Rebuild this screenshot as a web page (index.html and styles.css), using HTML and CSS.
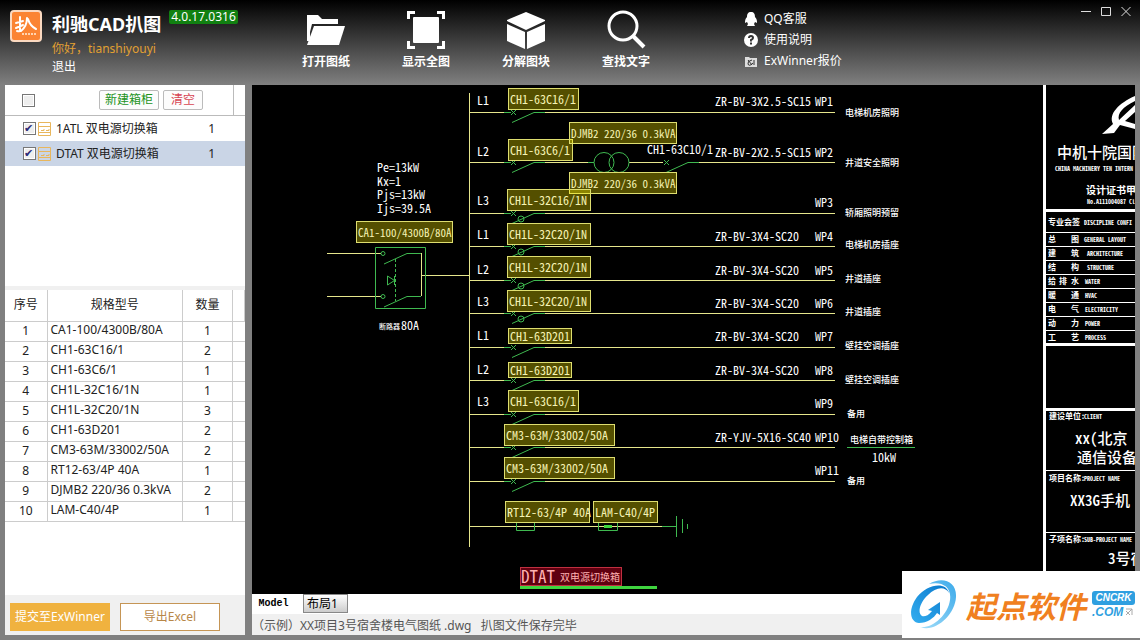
FILE: index.html
```html
<!DOCTYPE html>
<html lang="zh-CN">
<head>
    <meta charset="UTF-8">
    <meta name="viewport" content="width=device-width, initial-scale=1.0">
    <title>利驰CAD扒图</title>
    <link rel="stylesheet" href="styles.css">
</head>
<body>
    <!-- Title bar -->
    <header class="topbar">
        <div class="brand">
            <svg class="brandLogo" viewBox="0 0 32 32" aria-hidden="true">
                <rect x="1" y="1" width="30" height="30" rx="3" fill="#fb8433" stroke="#fbd9c0" stroke-width="2"/>
                <path d="M6 13l7-2M10 7v13q0 2-3 1M6 18l7-3M17 8q0 8-6 13M18 9q2 7 8 10" fill="none" stroke="#fff" stroke-width="2" stroke-linecap="round"/>
                <path d="M12 24h15" stroke="#ffd3b0" stroke-width="2" stroke-dasharray="2 1"/>
            </svg>
            <div class="brandText">
                <div class="titleLine">
                    <h1>利驰CAD扒图</h1>
                    <span class="version">4.0.17.0316</span>
                </div>
                <span class="hello">你好，tianshiyouyi</span>
                <a class="logout" href="#">退出</a>
            </div>
        </div>

        <nav class="tools">
            <button type="button">
                <svg viewBox="0 0 40 40"><path d="M1 5h11l4 4h16v5H6L2 30z" fill="#fff"/><path d="M1 5h3v26H1z" fill="#fff"/><path d="M8 16h31l-6 19H1z" fill="#fff"/></svg>
                打开图纸
            </button>
            <button type="button">
                <svg viewBox="0 0 40 40"><rect x="7" y="7" width="26" height="26" rx="1" fill="#fff"/><path d="M2.500 9V2.500H9M31 2.500h6.500V9M37.500 31v6.500H31M9 37.500H2.500V31" fill="none" stroke="#fff" stroke-width="3"/></svg>
                显示全图
            </button>
            <button type="button">
                <svg viewBox="0 0 40 40"><path d="M20 2l19 8v1l-19 9L1 11v-1zM1 14l18 8v17L1 31zM39 14l-18 8v17l18-8z" fill="#fff"/></svg>
                分解图块
            </button>
            <button type="button">
                <svg viewBox="0 0 40 40"><circle cx="17" cy="16" r="14" fill="none" stroke="#fff" stroke-width="3"/><path d="M27 26l11 11" stroke="#fff" stroke-width="4"/></svg>
                查找文字
            </button>
        </nav>

        <div class="help">
            <a href="#">
                <svg viewBox="0 0 14 14"><path d="M7 0c3 0 4 2 4 5 2 2 2 4 2 6l-2-1-1 2 1 2H3l1-2-1-2-2 1c0-2 0-4 2-6 0-3 1-5 4-5z" fill="#fff"/></svg>
                QQ客服
            </a>
            <a href="#">
                <svg viewBox="0 0 14 14"><circle cx="7" cy="7" r="7" fill="#fff"/><path d="M5 5q0-2 2-2t2 2q0 1-2 2v1.500M7 9.500v2" fill="none" stroke="#333" stroke-width="2"/></svg>
                使用说明
            </a>
            <a href="#">
                <svg viewBox="0 0 14 14"><path d="M1 3h4l1 1h7v9H1z" fill="#ddd"/><path d="M4 6l4 5M8 6q-5 1-4 4t5-1M10 6v5" fill="none" stroke="#333"/></svg>
                ExWinner报价
            </a>
        </div>

        <div class="windowButtons">
            <button type="button" aria-label="最小化"><svg viewBox="0 0 12 12"><path d="M1 6.500h10"/></svg></button>
            <button type="button" aria-label="最大化"><svg viewBox="0 0 12 12"><path d="M1.500 2.500h9v8h-9z"/></svg></button>
            <button type="button" aria-label="关闭"><svg viewBox="0 0 12 12"><path d="M1.500 2l9 9M10.500 2l-9 9"/></svg></button>
        </div>
    </header>

    <div class="workspace">
        <!-- Left panel: cabinets and parts -->
        <aside class="sidebar">
            <div class="cabinetHead">
                <input type="checkbox" aria-label="全选">
                <div class="cabinetActions">
                    <button type="button" class="newCabinet">新建箱柜</button>
                    <button type="button" class="clearCabinet">清空</button>
                </div>
            </div>
            <ul class="cabinets">
                <li>
                    <input type="checkbox" id="cab1" checked>
                    <svg viewBox="0 0 14 16"><path d="M.500 1.500h12v13H.500zM.500 5.500h12M.500 11.500h12M3 9.500h3V8M8 9.500h3V8" fill="none" stroke="#e8b65c"/></svg>
                    <label for="cab1">1ATL 双电源切换箱</label>
                    <span class="count">1</span>
                </li>
                <li class="selected">
                    <input type="checkbox" id="cab2" checked>
                    <svg viewBox="0 0 14 16"><path d="M.500 1.500h12v13H.500zM.500 5.500h12M.500 11.500h12M3 9.500h3V8M8 9.500h3V8" fill="none" stroke="#e8b65c"/></svg>
                    <label for="cab2">DTAT 双电源切换箱</label>
                    <span class="count">1</span>
                </li>
            </ul>
            <div class="parts">
                <table>
                    <thead>
                        <tr><th class="no">序号</th><th>规格型号</th><th class="qty">数量</th><th class="end"></th></tr>
                    </thead>
                    <tbody>
                        <tr><td>1</td><td>CA1-100/4300B/80A</td><td>1</td><td></td></tr>
                        <tr><td>2</td><td>CH1-63C16/1</td><td>2</td><td></td></tr>
                        <tr><td>3</td><td>CH1-63C6/1</td><td>1</td><td></td></tr>
                        <tr><td>4</td><td>CH1L-32C16/1N</td><td>1</td><td></td></tr>
                        <tr><td>5</td><td>CH1L-32C20/1N</td><td>3</td><td></td></tr>
                        <tr><td>6</td><td>CH1-63D201</td><td>2</td><td></td></tr>
                        <tr><td>7</td><td>CM3-63M/33002/50A</td><td>2</td><td></td></tr>
                        <tr><td>8</td><td>RT12-63/4P 40A</td><td>1</td><td></td></tr>
                        <tr><td>9</td><td>DJMB2 220/36 0.3kVA</td><td>2</td><td></td></tr>
                        <tr><td>10</td><td>LAM-C40/4P</td><td>1</td><td></td></tr>
                    </tbody>
                </table>
            </div>
            <div class="sidebarFoot">
                <button type="button" class="submit">提交至ExWinner</button>
                <button type="button" class="export">导出Excel</button>
            </div>
        </aside>

        <!-- Drawing view -->
        <main class="viewer">
            <div class="canvas">
                <svg class="drawing" viewBox="252 85 883 509" preserveAspectRatio="xMinYMin meet">
                    <defs>
                        <!-- one outgoing way: line, contact cross and blade -->
                        <g id="way">
                            <path class="wire" d="M470 .500h34M545 .500h290"/>
                            <path class="sym" d="M504 .500h7M511 -2l5 5M516 -2l-5 5M512 10.500l22-10h11"/>
                        </g>
                        <g id="rcd">
                            <use href="#way"/>
                            <circle class="sym" cx="521" cy="6" r="3"/>
                        </g>
                    </defs>

                    <!-- busbar and outgoing ways -->
                    <path class="wire" d="M469.500 93v454"/>
                    <use href="#way" y="112"/>
                    <path class="wire" d="M470 162.500h34M545 162.500h49M629 162.500h34M698 162.500h137"/>
                    <path class="sym" d="M504 162.500h7M511 160l5 5M516 160l-5 5M512 172.500l22-10h11M588 162.500h6M664 160l5 5M669 160l-5 5M666 172.500l22-10h11"/>
                    <circle class="sym" cx="604" cy="162.500" r="10"/>
                    <circle class="sym" cx="619" cy="162.500" r="10"/>
                    <use href="#rcd" y="213"/>
                    <use href="#rcd" y="246"/>
                    <use href="#rcd" y="280"/>
                    <use href="#rcd" y="313"/>
                    <use href="#way" y="347"/>
                    <use href="#way" y="380"/>
                    <use href="#way" y="414"/>
                    <use href="#way" y="447"/>
                    <use href="#way" y="481"/>
                    <path class="wire" d="M470 526.500h192"/>
                    <path class="sym" d="M516.500 522v8.500h18V522M598.500 522v8.500h19V522M662 526.500h14M676.500 516v21M682.500 519v14M687.500 524v5"/>
                    <rect x="604" y="525" width="8" height="3" fill="#3fd43f"/>

                    <!-- incoming changeover switch -->
                    <path class="wire" d="M327 253.500h54M327 296.500h54M421.500 253v43M422 275.500h47"/>
                    <path class="sym" d="M375.500 247.500h50v61h-50zM384 264l23-10.500h14M384 307l23-10.500h14M387.500 276v9l7-4.500zM394.500 276v9"/>
                    <path class="sym dash" d="M395.500 259v42"/>
                    <circle class="sym" cx="383" cy="253.500" r="2"/>
                    <circle class="sym" cx="383" cy="296.500" r="2"/>

                    <g class="cad">
                        <text x="377" y="172">Pe=13kW</text>
                        <text x="377" y="186">Kx=1</text>
                        <text x="377" y="199">Pjs=13kW</text>
                        <text x="377" y="213">Ijs=39.5A</text>
                        <text x="401" y="330">80A</text>
                        <text x="477" y="105">L1</text>
                        <text x="477" y="156">L2</text>
                        <text x="477" y="205">L3</text>
                        <text x="477" y="239">L1</text>
                        <text x="477" y="274">L2</text>
                        <text x="477" y="306">L3</text>
                        <text x="477" y="340">L1</text>
                        <text x="477" y="374">L2</text>
                        <text x="477" y="406">L3</text>
                        <text x="647" y="154">CH1-63C10/1</text>
                        <text x="715" y="106">ZR-BV-3X2.5-SC15</text>
                        <text x="715" y="157">ZR-BV-2X2.5-SC15</text>
                        <text x="715" y="241">ZR-BV-3X4-SC20</text>
                        <text x="715" y="275">ZR-BV-3X4-SC20</text>
                        <text x="715" y="308">ZR-BV-3X4-SC20</text>
                        <text x="715" y="341">ZR-BV-3X4-SC20</text>
                        <text x="715" y="375">ZR-BV-3X4-SC20</text>
                        <text x="715" y="442">ZR-YJV-5X16-SC40</text>
                        <text x="815" y="106">WP1</text>
                        <text x="815" y="157">WP2</text>
                        <text x="815" y="207">WP3</text>
                        <text x="815" y="241">WP4</text>
                        <text x="815" y="275">WP5</text>
                        <text x="815" y="308">WP6</text>
                        <text x="815" y="341">WP7</text>
                        <text x="815" y="375">WP8</text>
                        <text x="815" y="408">WP9</text>
                        <text x="815" y="442">WP10</text>
                        <text x="815" y="475">WP11</text>
                        <text x="872" y="462">10kW</text>
                    </g>

                    <g class="note">
                        <text x="379" y="329" class="tight">断路器</text>
                        <text x="845" y="116">电梯机房照明</text>
                        <text x="845" y="166">井道安全照明</text>
                        <text x="845" y="216">轿厢照明预留</text>
                        <text x="845" y="248">电梯机房插座</text>
                        <text x="845" y="282">井道插座</text>
                        <text x="845" y="315">井道插座</text>
                        <text x="845" y="349">壁挂空调插座</text>
                        <text x="845" y="383">壁挂空调插座</text>
                        <text x="847" y="417">备用</text>
                        <text x="850" y="443">电梯自带控制箱</text>
                        <text x="847" y="484">备用</text>
                    </g>
                    <path class="sym" d="M847 447.500h68"/>

                    <!-- recognised devices -->
                    <g class="hit">
                        <rect x="356.500" y="221.500" width="96" height="21"/>
                        <rect x="508.500" y="88.500" width="70" height="21"/>
                        <rect x="508.500" y="139.500" width="64" height="21"/>
                        <rect x="569.500" y="122.500" width="107" height="21"/>
                        <rect x="569.500" y="172.500" width="107" height="21"/>
                        <rect x="507.500" y="189.500" width="83" height="21"/>
                        <rect x="507.500" y="223.500" width="83" height="21"/>
                        <rect x="507.500" y="256.500" width="83" height="21"/>
                        <rect x="507.500" y="290.500" width="83" height="21"/>
                        <rect x="508.500" y="328.500" width="63" height="15"/>
                        <rect x="508.500" y="362.500" width="63" height="15"/>
                        <rect x="508.500" y="390.500" width="70" height="21"/>
                        <rect x="504.500" y="424.500" width="110" height="21"/>
                        <rect x="504.500" y="457.500" width="110" height="21"/>
                        <rect x="505.500" y="501.500" width="84" height="21"/>
                        <rect x="593.500" y="501.500" width="64" height="21"/>
                    </g>
                    <g class="cad hitText">
                        <text x="358" y="237" class="long">CA1-100/4300B/80A</text>
                        <text x="510" y="104">CH1-63C16/1</text>
                        <text x="510" y="155">CH1-63C6/1</text>
                        <text x="571" y="138" class="long">DJMB2 220/36 0.3kVA</text>
                        <text x="571" y="188" class="long">DJMB2 220/36 0.3kVA</text>
                        <text x="509" y="205">CH1L-32C16/1N</text>
                        <text x="509" y="239">CH1L-32C20/1N</text>
                        <text x="509" y="272">CH1L-32C20/1N</text>
                        <text x="509" y="306">CH1L-32C20/1N</text>
                        <text x="510" y="341">CH1-63D201</text>
                        <text x="510" y="375">CH1-63D201</text>
                        <text x="510" y="406">CH1-63C16/1</text>
                        <text x="506" y="440">CM3-63M/33002/50A</text>
                        <text x="506" y="473">CM3-63M/33002/50A</text>
                        <text x="507" y="517">RT12-63/4P 40A</text>
                        <text x="595" y="517">LAM-C40/4P</text>
                    </g>

                    <!-- cabinet name -->
                    <rect x="520.500" y="567.500" width="101" height="18" fill="#600010" stroke="#c03040"/>
                    <path d="M520 587.500h137" stroke="#3fd43f" stroke-width="3"/>
                    <text class="cabinetName" x="521" y="583">DTAT</text>
                    <text class="cabinetName small" x="560" y="581">双电源切换箱</text>

                    <!-- title block -->
                    <g stroke="#fff" fill="none">
                        <path stroke-width="3" d="M1044.500 85v509M1045 210.500h90M1045 344.500h90M1045 409.500h90"/>
                        <path d="M1046 232.500h89M1046 246.500h89M1046 260.500h89M1046 274.500h89M1046 288.500h89M1046 302.500h89M1046 316.500h89M1046 330.500h89M1046 470.500h89M1046 532.500h89"/>
                    </g>
                    <path d="M1102 134l11-10c-5-10 6-21 22-28v5c-12 6-18 12-16 19l16-15v7l-10 9 10 3v5l-15-4-6 8z" fill="#fff"/>
                    <g class="block">
                        <text x="1057" y="158" class="big">中机十院国际</text>
                        <text x="1055" y="171" class="en">CHINA MACHINERY TEN INTERN</text>
                        <text x="1086" y="194" class="mid">设计证书甲级</text>
                        <text x="1087" y="204" class="en">No.A111004087 Cl</text>
                        <text x="1048" y="225">专业会签</text><text x="1084" y="225" class="en">DISCIPLINE CONFI</text>
                        <text x="1048" y="242">总</text><text x="1071" y="242">图</text><text x="1084" y="242" class="en">GENERAL LAYOUT</text>
                        <text x="1048" y="256">建</text><text x="1071" y="256">筑</text><text x="1087" y="256" class="en">ARCHITECTURE</text>
                        <text x="1048" y="270">结</text><text x="1071" y="270">构</text><text x="1087" y="270" class="en">STRUCTURE</text>
                        <text x="1048" y="284">给</text><text x="1059" y="284">排</text><text x="1071" y="284">水</text><text x="1085" y="284" class="en">WATER</text>
                        <text x="1048" y="298">暖</text><text x="1071" y="298">通</text><text x="1085" y="298" class="en">HVAC</text>
                        <text x="1048" y="312">电</text><text x="1071" y="312">气</text><text x="1085" y="312" class="en">ELECTRICITY</text>
                        <text x="1048" y="326">动</text><text x="1071" y="326">力</text><text x="1085" y="326" class="en">POWER</text>
                        <text x="1048" y="340">工</text><text x="1071" y="340">艺</text><text x="1085" y="340" class="en">PROCESS</text>
                        <text x="1049" y="419">建设单位:</text><text x="1084" y="419" class="en">CLIENT</text>
                        <text x="1075" y="444" class="big">xx（北京</text>
                        <text x="1077" y="463" class="big">通信设备</text>
                        <text x="1049" y="481">项目名称:</text><text x="1084" y="481" class="en">PROJECT NAME</text>
                        <text x="1070" y="506" class="big">XX3G手机</text>
                        <text x="1049" y="542">子项名称:</text><text x="1084" y="542" class="en">SUB-PROJECT NAME</text>
                        <text x="1108" y="564" class="big">3号宿</text>
                    </g>
                </svg>
            </div>
            <div class="tabs">
                <button type="button" class="tab active">Model</button>
                <button type="button" class="tab layout">布局1</button>
            </div>
            <footer class="status">（示例）XX项目3号宿舍楼电气图纸 .dwg &nbsp; 扒图文件保存完毕</footer>
        </main>
    </div>

    <!-- Site badge over the bottom right corner -->
    <div class="badge">
        <svg class="badgeLogo" viewBox="0 0 48 50" aria-hidden="true">
            <defs>
                <linearGradient id="ring" x1="0" y1="1" x2="1" y2="0">
                    <stop offset="0" stop-color="#35aef0"/>
                    <stop offset="1" stop-color="#0878cc"/>
                </linearGradient>
                <linearGradient id="shade" x1="1" y1="0" x2="0" y2="1">
                    <stop offset="0" stop-color="#3aa9ea"/>
                    <stop offset="1" stop-color="#a4def9"/>
                </linearGradient>
            </defs>
            <path d="M19 4C32-4 47 1 46 17 45 35 25 53 10 47 22 49 38 35 40 20 42 6 31 1 19 4z" fill="url(#shade)"/>
            <path d="M39 13C36 1 17 4 7 17-3 31 1 43 9 43c8 0 15-5 18-10l3 2V22l-12 8 4 1c-4 5-8 6-10 5-5-3-2-14 6-21 8-8 17-9 21-2z" fill="url(#ring)"/>
        </svg>
        <span class="badgeName">起点软件</span>
        <span class="badgeSite">
            <span class="bubble">CNCRK</span>
            <span class="dotcom">.COM<svg viewBox="0 0 8 8"><path d="M1 1h6v6M1 7l6-6M1 3l4 4" fill="none" stroke="#aaa"/></svg></span>
        </span>
    </div>
</body>
</html>
```
FILE: styles.css
```css
* {
    box-sizing: border-box;
}

body {
    margin: 0;
    min-height: 100vh;
    display: flex;
    flex-direction: column;
    position: relative;
    background: #808080;
    font-family: "Noto Sans", "Noto Sans CJK SC", sans-serif;
    font-size: 12px;
    line-height: 16px;
    color: #222;
}

button {
    font: inherit;
    padding: 0;
    cursor: pointer;
}

a {
    color: inherit;
    text-decoration: none;
}

/* Title bar */
.topbar {
    display: flex;
    height: 85px;
    background: linear-gradient(#000, #808080);
    color: #fff;
}

.brand {
    display: flex;
    gap: 10px;
    width: 276px;
    padding: 10px 0 0 10px;
}

.brandLogo {
    width: 32px;
    height: 32px;
}

.brandText {
    display: flex;
    flex-direction: column;
    align-items: flex-start;
    white-space: nowrap;
}

.titleLine {
    display: flex;
    gap: 8px;
    align-items: flex-start;
}

h1 {
    margin: 0;
    font-size: 18px;
    line-height: 29px;
}

.version {
    padding: 0 2px;
    border-radius: 2px;
    background: #118011;
    line-height: 14px;
}

.hello {
    color: #e2a032;
    font-size: 12px;
    line-height: 20px;
}

.tools {
    display: flex;
}

.tools button {
    display: flex;
    flex-direction: column;
    align-items: center;
    gap: 4px;
    width: 100px;
    padding-top: 10px;
    border: 0;
    background: none;
    color: #fff;
    font-weight: bold;
}

.tools svg {
    width: 40px;
    height: 40px;
}

.help {
    display: flex;
    flex-direction: column;
    gap: 5px;
    padding: 11px 0 0 68px;
}

.help a {
    display: flex;
    align-items: center;
    gap: 6px;
}

.help svg {
    width: 14px;
    height: 14px;
}

.windowButtons {
    display: flex;
    align-items: flex-start;
    gap: 8px;
    margin-left: auto;
    padding: 5px 8px 0 0;
}

.windowButtons button {
    display: flex;
    border: 0;
    background: none;
}

.windowButtons svg {
    width: 12px;
    height: 12px;
    fill: none;
    stroke: #ddd;
}

/* Body of the window */
.workspace {
    flex: 1;
    display: flex;
    gap: 7px;
    padding: 0 5px 5px;
}

.sidebar {
    display: flex;
    flex-direction: column;
    width: 240px;
    background: #fff;
}

input[type="checkbox"] {
    appearance: none;
    width: 13px;
    height: 13px;
    margin: 0;
    border: 1px solid #777;
    background: #eee;
    box-shadow: inset 0 0 0 1px #fff;
}

input[type="checkbox"]:checked::before {
    content: "✔";
    display: block;
    color: #2b2b78;
    font: 11px/11px "DejaVu Sans", sans-serif;
}

.cabinetHead {
    display: flex;
    align-items: center;
    gap: 64px;
    height: 31px;
    padding-left: 17px;
    border-bottom: 1px solid #bbb;
}

.cabinetActions {
    display: flex;
    flex: 1;
    gap: 4px;
    align-items: center;
    align-self: stretch;
    margin-right: 11px;
    border-right: 1px solid #bbb;
}

.cabinetActions button {
    height: 20px;
    border: 1px solid #bbb;
    border-radius: 2px;
    background: #fcfcfc;
}

.newCabinet {
    width: 60px;
    color: #229322;
}

.clearCabinet {
    width: 40px;
    color: #d84452;
}

.cabinets {
    flex: 1;
    margin: 0;
    padding: 0;
    list-style: none;
}

.cabinets li {
    display: flex;
    align-items: center;
    height: 25px;
    padding: 0 30px 0 18px;
}

.cabinets li.selected {
    background: #cad5e6;
}

.cabinets svg {
    width: 14px;
    height: 16px;
    margin: 0 4px 0 2px;
}

.count {
    margin-left: auto;
}

/* Parts list */
.parts {
    height: 309px;
    border-top: 4px solid #f0f0f0;
}

table {
    width: 100%;
    border-collapse: collapse;
    table-layout: fixed;
}

th, td {
    height: 20px;
    padding: 0;
    border-right: 1px solid #ccc;
    border-bottom: 1px solid #ccc;
    text-align: center;
    line-height: 16px;
}

th {
    height: 31px;
    font-weight: normal;
}

td:nth-child(2) {
    padding: 0 0 2px 3px;
    text-align: left;
    white-space: nowrap;
}

td:last-child {
    border-right: 0;
}

.no { width: 42px; }
.qty { width: 50px; }
.end { width: 12px; }

.sidebarFoot {
    display: flex;
    gap: 10px;
    padding: 8px 5px 4px;
    background: #f0f0f0;
}

.sidebarFoot button {
    width: 100px;
    height: 28px;
    white-space: nowrap;
}

.submit {
    border: 1px solid #f0b23f;
    background: #f0b23f;
    color: #fff;
}

.export {
    border: 1px solid #c59555;
    background: #fff;
    color: #b88748;
}

/* Drawing view */
.viewer {
    flex: 1;
    min-width: 0;
    display: flex;
    flex-direction: column;
}

.canvas {
    flex: 1;
    overflow: hidden;
    background: #000;
}

.drawing {
    display: block;
    width: 100%;
}

.wire {
    fill: none;
    stroke: #e6e68c;
}

.sym {
    fill: none;
    stroke: #3fb950;
}

.dash {
    stroke-dasharray: 3 2;
}

/* Half-width latin, as in a plotter font */
.cad {
    fill: #fff;
    font: 12px "Noto Sans CJK SC", sans-serif;
    font-feature-settings: "hwid";
}

.cad .long {
    font-size: 11px;
}

.hit {
    fill: rgba(255, 240, 0, 0.33);
    stroke: #dede70;
}

.hitText {
    fill: #f6f3b4;
}

.note {
    fill: #fff;
    font: 500 9px "Noto Sans CJK SC", sans-serif;
}

.tight {
    font-size: 7px;
}

.cabinetName {
    fill: #ffb0b0;
    font: 17px "Noto Sans CJK SC", sans-serif;
    font-feature-settings: "hwid";
}

.cabinetName.small {
    font-size: 10px;
}

.block {
    fill: #fff;
    font: bold 8px "Noto Sans CJK SC", sans-serif;
    font-feature-settings: "hwid";
}

.block .en {
    font-size: 6px;
}

.block .mid {
    font-size: 10px;
}

.block .big {
    font-size: 15px;
    font-weight: 500;
}

.tabs {
    display: flex;
    align-items: flex-start;
    gap: 8px;
    height: 20px;
    background: #fff;
}

.tab {
    height: 19px;
    border: 0;
    background: #fff;
    color: #000;
}

.tab.active {
    width: 43px;
    font-family: "Liberation Mono", monospace;
    font-size: 10px;
    font-weight: bold;
}

.tab.layout {
    width: 45px;
    padding-right: 6px;
    border: 1px solid #888;
    background: linear-gradient(#fff, #ccc);
    line-height: 14px;
}

.status {
    height: 21px;
    padding-top: 4px;
    background: #f0f0f0;
    color: #555;
    white-space: nowrap;
}

/* Site badge */
.badge {
    position: absolute;
    right: 0;
    bottom: 2px;
    display: flex;
    align-items: center;
    width: 238px;
    height: 67px;
    padding-left: 8px;
    background: #fff;
}

.badgeLogo {
    width: 48px;
    height: 50px;
}

.badgeName {
    margin-left: 8px;
    color: #f08020;
    font: italic bold 30px/40px "Noto Sans CJK SC", sans-serif;
    white-space: nowrap;
}

.badgeSite {
    display: flex;
    flex-direction: column;
    margin-left: 6px;
    font: italic bold 12px/14px "Liberation Sans", sans-serif;
}

.bubble {
    width: 43px;
    border-radius: 3px;
    background: #2f9fe0;
    color: #fff;
    text-align: center;
    font-size: 10px;
}

.dotcom {
    display: flex;
    align-items: center;
    gap: 2px;
    color: #2f9fe0;
}

.dotcom svg {
    width: 8px;
    height: 8px;
}
```
